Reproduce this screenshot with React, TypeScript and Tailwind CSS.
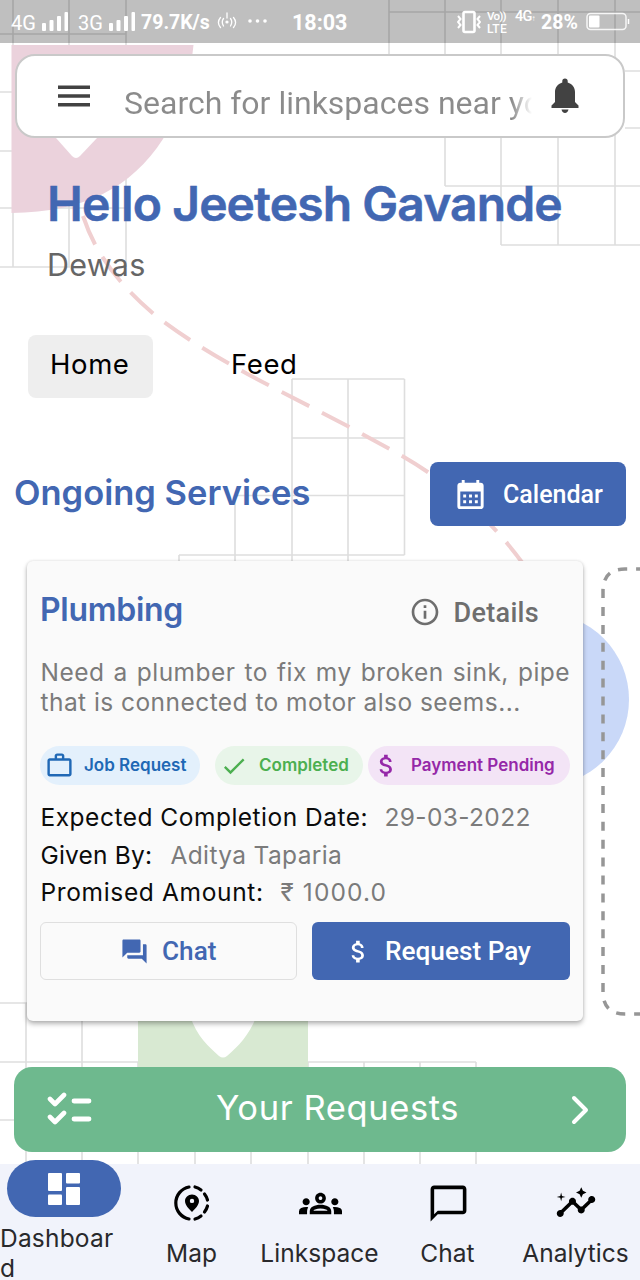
import type { ReactNode } from "react";
import {
  MdCalendarMonth,
  MdInfoOutline,
  MdWorkOutline,
  MdCheck,
  MdAttachMoney,
  MdQuestionAnswer,
  MdOutlineGroups,
  MdChatBubbleOutline,
  MdInsights,
} from "react-icons/md";

function Backdrop() {
  return (
    <svg className="absolute inset-0 -z-10" width="640" height="1280" viewBox="0 0 640 1280" fill="none">
      <g stroke="#dedede" strokeWidth="1.6">
        <path d="M0 34H126M0 92H12M0 151H12M0 208H126M0 267H70M13 0V267M69 0V267M126 0V45M126 170V267" />
        <path d="M389 12H640M625 71H640M625 128H640M445 186H640M501 245H640" />
        <path d="M389 0V54M445 0V186M501 0V245M558 0V245M615 0V245" />
        <path d="M292 379H404.5M292 438H404.5M235 495.5H404.5M179 555H404.5" />
        <path d="M292 379V562M348 379V562M404.5 379V555M235 495V562M179 555V562" />
        <path d="M0 1003H27M0 1062H476M0 1120H14M26 1003V1164M82 1003V1164" />
        <path d="M138 1062V1164M195 1062V1164M251 1062V1164M308 1062V1164M364 1062V1164M420 1062V1164M476 1062V1164" />
      </g>
      <path d="M11.500 45H193.500C190 82 180 114 163 139C131 188 85 212 11.500 213Z" fill="#ebd2dc" />
      <path d="M56 138H97L80 156Q76 160 72 156Z" fill="#fff" />
      <path
        d="M83 216C95 252 116 282 156 316C204 353 262 382 313 408L355 430L395 452C440 477 486 512 524 565"
        stroke="#f0cfd0"
        strokeWidth="4"
        strokeDasharray="31 14.4"
      />
      <circle cx="542.4" cy="699.5" r="86.6" fill="#c9d8f8" />
      <path d="M138 1010H308V1070H138Z" fill="#d8e9d2" />
      <path d="M190 1015C196 1036 209 1047 219 1056Q223 1059 227 1056C239 1046 250 1034 257 1015Z" fill="#fff" />
    </svg>
  );
}

function Bars() {
  return (
    <svg width="27" height="21" viewBox="0 0 27 21" fill="#fff">
      <rect x="0" y="12" width="4" height="8" rx="1" />
      <rect x="7.500" y="9" width="4" height="11" rx="1" />
      <rect x="15" y="5" width="4" height="15" rx="1" />
      <rect x="22.500" y="1" width="3.500" height="19" rx="1" />
    </svg>
  );
}

function StatusBar() {
  return (
    <div className="flex h-[43px] items-center bg-black/25 pt-[3px] pl-[11px] font-['Roboto',sans-serif] leading-none font-bold text-white">
      <span className="w-[31px] text-[20px] font-normal">4G</span>
      <span className="w-[36px] pb-[4px]"><Bars /></span>
      <span className="w-[31px] text-[20px] font-normal">3G</span>
      <span className="w-[32px] pb-[4px]"><Bars /></span>
      <span className="w-[76px] text-[19.5px]">79.7K/s</span>
      <svg className="mb-[4px]" width="20" height="18" viewBox="0 0 20 18" fill="none" stroke="#fff" strokeWidth="1.300" strokeLinecap="round">
        <circle cx="10" cy="10" r="1.600" fill="#fff" stroke="none" />
        <path d="M10 1V6M6.500 6.500C5 8.500 5 11.500 6.500 14M13.500 6.500C15 8.500 15 11.500 13.500 14M3.500 5.500C1 8.500 1 12.500 3.500 15.500M16.500 5.500C19 8.500 19 12.500 16.500 15.500" />
      </svg>
      <svg className="mb-[4px] ml-[10px]" width="22" height="6" viewBox="0 0 22 6" fill="#fff">
        <circle cx="3" cy="3" r="1.800" /><circle cx="10.500" cy="3" r="1.800" /><circle cx="18" cy="3" r="1.800" />
      </svg>
      <span className="ml-[23px] w-[165px] text-[21.5px]">18:03</span>
      <svg className="mb-[3px]" width="24" height="24" viewBox="0 0 24 24" fill="none" stroke="#fff" strokeWidth="2">
        <rect x="6.500" y="2" width="11" height="20" rx="1.500" strokeWidth="2.600" />
        <path d="M1 6L3.500 9L1 12L3.500 15L1 18M23 6L20.500 9L23 12L20.500 15L23 18" />
      </svg>
      <span className="mb-[1px] ml-[6px] flex w-[28px] flex-col text-[12px] leading-[13px] font-medium">
        <span className="text-[11.5px] tracking-[-0.7px]">Vo))</span>
        <span className="tracking-[0.3px]">LTE</span>
      </span>
      <span className="w-[26px] pb-[11px] text-[14.5px] font-medium tracking-[-0.8px]">4G<span className="text-[8px]">↑</span></span>
      <span className="w-[45px] text-[19.5px]">28%</span>
      <svg className="mb-[3px]" width="44" height="20" viewBox="0 0 44 20" fill="none" stroke="#fff" strokeWidth="1.500">
        <rect x="1" y="1.500" width="39" height="16" rx="3.500" opacity=".85" />
        <path d="M42.500 7V12" />
        <rect x="3" y="3.500" width="10.500" height="12" fill="#fff" stroke="none" rx="1" />
      </svg>
    </div>
  );
}

function SearchBar() {
  return (
    <div className="mt-[11px] mr-[15px] ml-[15px] flex h-[84px] items-center rounded-[20px] border-[2.5px] border-[#c9c9c9] bg-white font-['Roboto',sans-serif]">
      <svg className="mr-[33px] ml-[40px]" width="34" height="24" viewBox="0 0 34 24" fill="#424242">
        <path d="M1 1.500H33V5H1ZM1 10.200H33V13.700H1ZM1 19H33V22.500H1Z" />
      </svg>
      <div className="mt-[14px] w-[408px] overflow-hidden bg-gradient-to-r from-[#8b8b8b] from-95% to-transparent bg-clip-text text-[32px] leading-[44px] whitespace-nowrap text-transparent">
        Search for linkspaces near you
      </div>
      <svg className="ml-[18px]" width="30" height="38" viewBox="0 0 30 38" fill="#424242">
        <path d="M15 1.500C13.300 1.500 12.300 2.700 12.300 4V5.400C7.500 6.800 5 10.500 5 15V25L1.500 28.500V31H28.500V28.500L25 25V15C25 10.500 22.500 6.800 17.700 5.400V4C17.700 2.700 16.700 1.500 15 1.500ZM11.500 32.500H18.500C18 34.800 16.800 36 15 36S12 34.800 11.500 32.500Z" />
      </svg>
    </div>
  );
}

function Chip({ icon, label, className }: { icon: ReactNode; label: string; className: string }) {
  return (
    <div className={`flex h-[39px] items-center rounded-full text-[17px] font-semibold whitespace-nowrap ${className}`}>
      {icon}
      {label}
    </div>
  );
}

function Field({ label, value, className, valueClassName = "tracking-[0.35px]" }: { label: string; value: string; className: string; valueClassName?: string }) {
  return (
    <div className="flex h-[37.7px] items-center pl-[0.5px] text-[24.5px] leading-[37.7px] whitespace-nowrap">
      <span className={`shrink-0 text-[#0b0b0b] ${className}`}>{label}</span>
      <span className={`text-[#7b7b7b] ${valueClassName}`}>{value}</span>
    </div>
  );
}

function ServiceCard() {
  return (
    <div className="ml-[27px] h-[460px] w-[556px] shrink-0 rounded-[6px] bg-[#fafafa] pt-[28px] pr-[13px] pl-[13px] shadow-[0_3px_5px_rgba(0,0,0,0.28),0_0_3px_rgba(0,0,0,0.12)]">
      <div className="flex h-[40px] justify-between">
        <h3 className="text-[32px] leading-[41px] font-semibold tracking-[-0.3px] text-[#4267b2]">Plumbing</h3>
        <div className="flex items-center pt-[8px] pr-[31px] font-['Roboto',sans-serif] text-[27px] font-medium tracking-[0.3px] text-[#6e6e6e]">
          <MdInfoOutline className="mr-[13px] mb-[2px] size-[32px]" />
          Details
        </div>
      </div>
      <div className="mt-[28px] pl-[0.5px] text-[24.5px] leading-[30px] tracking-[0.45px] whitespace-nowrap text-[#7b7b7b]">
        <p className="[text-align-last:justify]">Need a plumber to fix my broken sink, pipe</p>
        <p>that is connected to motor also seems...</p>
      </div>
      <div className="mt-[29px] flex">
        <Chip className="w-[160px] bg-[#e3f0fc] pl-[5px] text-[#2068b5]" icon={<MdWorkOutline className="mr-[10px] size-[29px]" />} label="Job Request" />
        <Chip className="ml-[15px] w-[148px] bg-[#e8f5e9] pl-[5px] text-[#4caf50]" icon={<MdCheck className="mr-[11px] size-[28px]" />} label="Completed" />
        <Chip className="ml-[5px] w-[202px] bg-[#f3e4f6] pl-[4px] text-[#9528a8]" icon={<MdAttachMoney className="mr-[10px] size-[29px]" />} label="Payment Pending" />
      </div>
      <div className="mt-[14px] h-[113px]">
        <Field className="w-[344px] tracking-[0.5px]" label="Expected Completion Date:" value="29-03-2022" />
        <Field className="w-[130px] tracking-[0.2px]" label="Given By:" value="Aditya Taparia" />
        <Field className="w-[240px] tracking-[0.65px]" label="Promised Amount:" value="₹ 1000.0" valueClassName="tracking-[1.1px]" />
      </div>
      <div className="mt-[10px] flex gap-[15px] font-['Roboto',sans-serif] text-[26.2px] font-medium">
        <button className="flex h-[58px] w-[257px] items-center rounded-[6px] border-[1.5px] border-[#dfdfdf] pt-[2px] pl-[79px] text-[#4267b2]">
          <MdQuestionAnswer className="mr-[13px] mb-[2px] size-[29px]" />
          Chat
        </button>
        <button className="flex h-[58px] flex-1 items-center rounded-[6px] bg-[#4267b2] pt-[2px] pl-[32px] text-white">
          <MdAttachMoney className="mr-[12px] mb-[2px] size-[29px]" />
          Request Pay
        </button>
      </div>
    </div>
  );
}

function NavItem({ icon, label }: { icon: ReactNode; label: string }) {
  return (
    <div className="flex w-[128px] flex-col items-center">
      <div className="mt-[17px] flex h-[44px] items-center">{icon}</div>
      <span className="mt-[13px] -ml-px text-[24.5px] leading-[30px] tracking-[0.05px] whitespace-nowrap">{label}</span>
    </div>
  );
}

export default function App() {
  return (
    <div className="relative isolate flex h-[1280px] w-[640px] flex-col overflow-hidden bg-white font-['Inter','Noto_Sans',sans-serif]">
      <Backdrop />
      <StatusBar />
      <SearchBar />
      <h1 className="mt-[36px] ml-[47px] text-[48px] leading-[60px] font-semibold tracking-[-0.9px] whitespace-nowrap text-[#4267b2] [-webkit-text-stroke:0.5px_#4267b2]">Hello Jeetesh Gavande</h1>
      <p className="mt-[10px] ml-[47px] text-[30.5px] leading-[42px] tracking-[0.2px] text-[#666]">Dewas</p>

      <div className="mt-[49px] ml-[28px] flex h-[63px] text-[27.5px] tracking-[0.6px] text-black">
        <div className="flex w-[125px] items-center rounded-[8px] bg-[#eee] pb-[4px] pl-[22px]">Home</div>
        <div className="ml-[78px] flex items-center pb-[4px]">Feed</div>
      </div>

      <div className="mt-[64px] mr-[14px] ml-[14px] flex h-[64px] items-center justify-between">
        <h2 className="pb-[2px] text-[34.5px] leading-[42px] font-semibold text-[#4267b2]">Ongoing Services</h2>
        <button className="flex h-[64px] w-[196px] items-center rounded-[8px] bg-[#4267b2] pt-[2px] pl-[23px] font-['Roboto',sans-serif] text-[25px] font-medium text-white">
          <MdCalendarMonth className="mr-[15px] mb-[2px] size-[35px]" />
          Calendar
        </button>
      </div>

      <div className="mt-[35px] flex w-[640px] items-start overflow-visible">
        <ServiceCard />
        <svg className="mt-[5px] ml-[17px] shrink-0" width="40" height="452" viewBox="0 0 40 452" fill="none">
          <path d="M60 3H25Q3 3 3 25V426Q3 448 25 448H60" stroke="#969696" strokeWidth="3.500" strokeDasharray="9 8.900" strokeDashoffset="3" />
        </svg>
      </div>

      <button className="mt-[46px] mr-[14px] ml-[14px] flex h-[85px] items-center rounded-[18px] bg-[#6eb98e] pl-[33px] text-white">
        <svg className="mb-[3px]" width="46" height="34" viewBox="0 0 46 34" fill="none" stroke="#fff" strokeWidth="4.600" strokeLinecap="round" strokeLinejoin="round">
          <path d="M3 8L8 13L17 4M3 26L8 31L17 22" />
          <path d="M27 10H42M27 28H42" strokeWidth="4.800" />
        </svg>
        <span className="ml-[123px] w-[355px] pb-[3px] text-left text-[34.5px] leading-[42px] tracking-[0.6px]">Your Requests</span>
        <svg width="20" height="32" viewBox="0 0 20 32" fill="none" stroke="#fff" strokeWidth="4" strokeLinecap="round" strokeLinejoin="round">
          <path d="M3 4L15 16L3 28" />
        </svg>
      </button>

      <nav className="mt-[12px] flex h-[116px] bg-[#f1f3fb] text-[#29292c]">
        <div className="w-[128px]">
          <div className="mt-[-4px] ml-[7px] flex h-[57px] w-[114px] items-center justify-center rounded-full bg-[#4267b2]">
            <svg width="32" height="32" viewBox="0 0 32 32" fill="#fff">
              <rect width="14" height="18" rx="1" />
              <rect y="21.500" width="14" height="10.500" rx="1" />
              <rect x="18" width="14" height="10.500" rx="1" />
              <rect x="18" y="14" width="14" height="18" rx="1" />
            </svg>
          </div>
          <p className="mt-[6px] text-[24.5px] leading-[30px] tracking-[0.2px]">
            Dashboar
            <br />d
          </p>
        </div>
        <NavItem
          label="Map"
          icon={
            <svg width="38" height="38" viewBox="0 0 38 38" fill="none" stroke="#000" strokeWidth="3.200" strokeLinecap="round">
              <path d="M16 3A16.300 16.300 0 0 0 16 35" />
              <path d="M22 3A16.300 16.300 0 0 1 28 6M31.500 10A16.300 16.300 0 0 1 34.500 16M34.500 22A16.300 16.300 0 0 1 31.500 28M28 32A16.300 16.300 0 0 1 22 35" />
              <path d="M19 10.500C15 10.500 12 13.500 12 17C12 21 16 25 19 28C22 25 26 21 26 17C26 13.500 23 10.500 19 10.500ZM19 14.700A2.200 2.200 0 1 1 19 19.100A2.200 2.200 0 1 1 19 14.700Z" fill="#000" fillRule="evenodd" stroke="none" />
            </svg>
          }
        />
        <NavItem label="Linkspace" icon={<MdOutlineGroups className="size-[43px] text-black" />} />
        <NavItem label="Chat" icon={<MdChatBubbleOutline className="size-[43px] text-black" />} />
        <NavItem label="Analytics" icon={<MdInsights className="size-[42px] text-black" />} />
      </nav>
    </div>
  );
}
